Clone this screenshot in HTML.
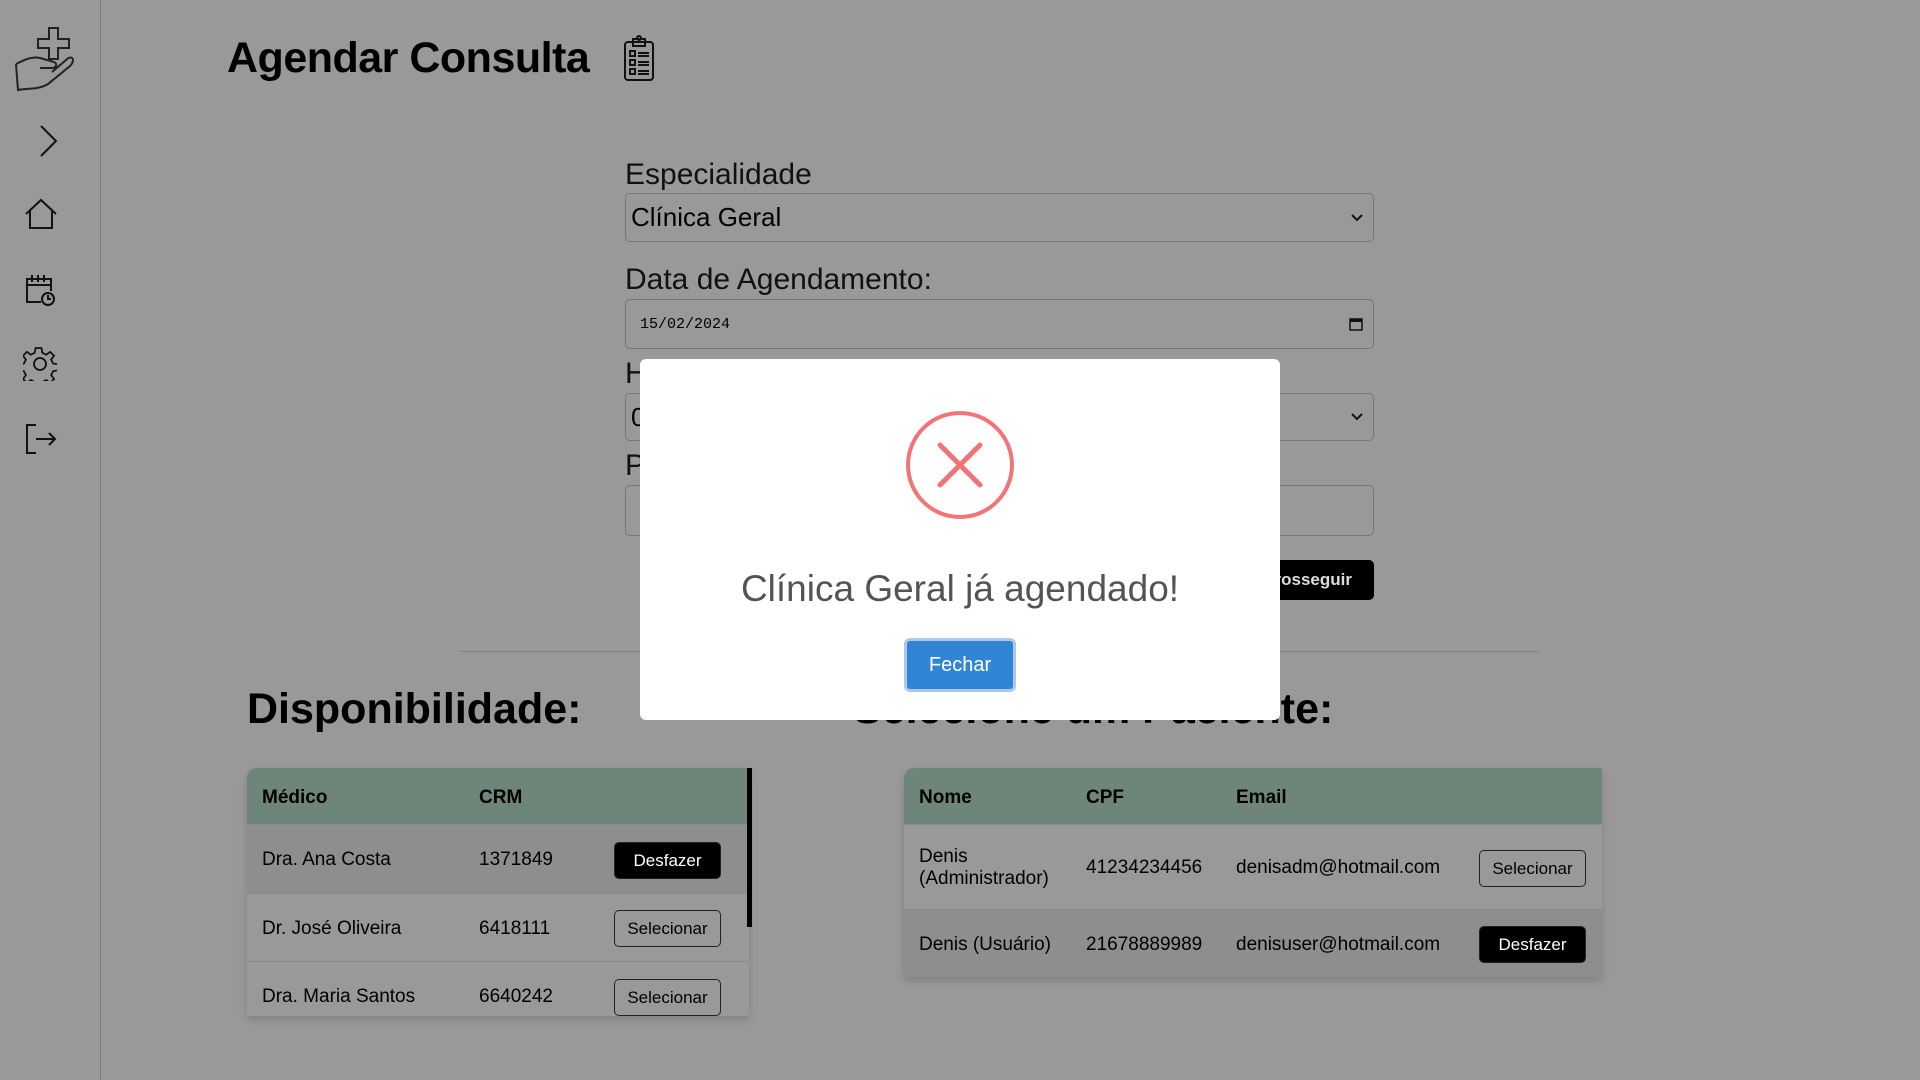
<!DOCTYPE html>
<html><head><meta charset="utf-8"><style>
*{box-sizing:border-box;margin:0;padding:0}
body{width:1920px;height:1080px;background:#999;font-family:"Liberation Sans",sans-serif;position:relative;overflow:hidden;color:#000}
.side{position:absolute;left:0;top:0;width:101px;height:1080px;border-right:1px solid #7a7a7a}
.abs{position:absolute}
h1{position:absolute;left:227px;top:34px;font-size:43px;font-weight:bold;letter-spacing:-0.5px}
.lbl{position:absolute;left:625px;font-size:30px;color:#111}
.inp{position:absolute;left:625px;width:749px;border:1px solid #777;border-radius:5px;font-size:26px;padding-left:5px;display:flex;align-items:center}
.hr{position:absolute;left:460px;top:651px;width:1078px;height:1px;background:#808080}
h2{position:absolute;font-size:43px;font-weight:bold}
table{border-collapse:collapse;font-size:19px}
th{background:#6e8679;text-align:left;height:56px;padding-left:15px;padding-top:4px}
td{padding-left:15px;border-top:1px solid #8a8a8a;padding-top:3px}
.btn{display:inline-block;width:107px;height:37px;border:1px solid #222;border-radius:5px;font-size:17px;text-align:center;line-height:35px}
.dark{background:#000;color:#fff}
.modal{position:absolute;left:640px;top:359px;width:640px;height:361px;background:#fff;border-radius:6px}
.wrap{position:absolute;box-shadow:0 4px 8px rgba(0,0,0,.15);border-top-left-radius:10px;overflow:hidden}
</style></head><body>
<div class="side">
<svg class="abs" style="left:14px;top:24px" width="76" height="74" viewBox="0 0 76 74" fill="none" stroke="#222" stroke-width="2">
<path d="M35 4h9v11h11v9H44v11h-9V24H24v-9h11z"/>
<path d="M2 40c8-4 16-8 24-6l14 4c4 2 2 6-2 6H26M2 40l2 26c10-2 20 0 30-6l22-18c6-6 2-12-4-6L38 48"/>
</svg>
<svg class="abs" style="left:38px;top:124px" width="22" height="34" viewBox="0 0 22 34" fill="none" stroke="#111" stroke-width="2"><path d="M3 2l15 15L3 32"/></svg>
<svg class="abs" style="left:24px;top:198px" width="34" height="32" viewBox="0 0 34 32" fill="none" stroke="#111" stroke-width="2"><path d="M2 16L17 2l15 14M6 13v17h22V13"/></svg>
<svg class="abs" style="left:24px;top:273px" width="32" height="34" viewBox="0 0 32 34" fill="none" stroke="#111" stroke-width="2"><path d="M17 29H3V6h24v12M3 12h24M8 2v7M14 2v7M20 2v7"/><circle cx="24" cy="26" r="6"/><path d="M24 22v4h3"/></svg>
<svg class="abs" style="left:23px;top:347px" width="34" height="34" viewBox="0 0 34 34" fill="none" stroke="#111" stroke-width="1.8"><path d="M14 2h6l1 5 4 2 4-3 4 4-3 4 2 4 5 1v6l-5 1-2 4 3 4-4 4-4-3-4 2-1 5h-6l-1-5-4-2-4 3-4-4 3-4-2-4-5-1v-6l5-1 2-4-3-4 4-4 4 3 4-2z" transform="scale(.97) translate(-1 -1)"/><circle cx="17" cy="17" r="6"/></svg>
<svg class="abs" style="left:24px;top:422px" width="34" height="34" viewBox="0 0 34 34" fill="none" stroke="#111" stroke-width="2"><path d="M12 3H3v28h9M12 17h19M25 11l6 6-6 6"/></svg>
</div>
<h1>Agendar Consulta</h1>
<svg class="abs" style="left:622px;top:34px" width="34" height="48" viewBox="0 0 34 48" fill="none" stroke="#111" stroke-width="2"><rect x="3" y="8" width="28" height="38" rx="3"/><path d="M11 8V5h12v3M11 8v4h12V8"/><circle cx="17" cy="4" r="2"/><rect x="8" y="17" width="5" height="5"/><rect x="8" y="26" width="5" height="5"/><rect x="8" y="35" width="5" height="5"/><path d="M16 19h11M16 22h11M16 28h11M16 31h11M16 37h11M16 40h11"/></svg>

<div class="lbl" style="top:158px">Especialidade</div>
<div class="inp" style="top:193px;height:49px">Clínica Geral<svg style="position:absolute;right:10px" width="12" height="8" viewBox="0 0 12 8"><path d="M1 1l5 5 5-5" fill="none" stroke="#111" stroke-width="2"/></svg></div>
<div class="lbl" style="top:263px">Data de Agendamento:</div>
<div class="inp" style="top:299px;height:50px;font-family:'Liberation Mono',monospace;font-size:15px;padding-left:14px">15/02/2024<svg style="position:absolute;right:10px" width="14" height="14" viewBox="0 0 14 14"><rect x="1" y="2" width="12" height="11" fill="none" stroke="#111" stroke-width="1.5"/><rect x="1" y="2" width="12" height="3" fill="#111"/></svg></div>
<div class="lbl" style="top:357px">H</div>
<div class="inp" style="top:393px;height:48px">0<svg style="position:absolute;right:10px" width="12" height="8" viewBox="0 0 12 8"><path d="M1 1l5 5 5-5" fill="none" stroke="#111" stroke-width="2"/></svg></div>
<div class="lbl" style="top:449px">P</div>
<div class="inp" style="top:485px;height:51px"></div>
<div class="abs" style="left:1220px;top:560px;width:154px;height:40px;background:#000;border-radius:5px;color:#ddd;font-weight:bold;font-size:17px;line-height:40px;text-align:right;padding-right:22px">Prosseguir</div>
<div class="hr"></div>

<h2 style="left:247px;top:685px">Disponibilidade:</h2>
<h2 style="left:853px;top:685px">Selecione um Paciente:</h2>

<div class="wrap" style="left:247px;top:768px;width:502px;height:248px">
<table style="width:502px">
<tr><th style="width:217px">Médico</th><th style="width:135px">CRM</th><th></th></tr>
<tr style="background:#8e8e8e;height:69px"><td>Dra. Ana Costa</td><td>1371849</td><td><span class="btn dark">Desfazer</span></td></tr>
<tr style="height:68px"><td>Dr. José Oliveira</td><td>6418111</td><td><span class="btn">Selecionar</span></td></tr>
<tr style="height:69px"><td>Dra. Maria Santos</td><td>6640242</td><td><span class="btn">Selecionar</span></td></tr>
</table></div>
<div class="abs" style="left:747px;top:768px;width:5px;height:159px;background:#000"></div>

<div class="wrap" style="left:904px;top:768px;width:698px">
<table style="width:698px">
<tr><th style="width:167px">Nome</th><th style="width:150px">CPF</th><th style="width:243px">Email</th><th></th></tr>
<tr style="height:85px"><td>Denis<br>(Administrador)</td><td>41234234456</td><td>denisadm@hotmail.com</td><td><span class="btn">Selecionar</span></td></tr>
<tr style="background:#8e8e8e;height:68px"><td>Denis (Usuário)</td><td>21678889989</td><td>denisuser@hotmail.com</td><td><span class="btn dark">Desfazer</span></td></tr>
</table></div>

<div class="modal">
<svg class="abs" style="left:264px;top:50px" width="112" height="112" viewBox="0 0 112 112" fill="none" stroke="#f27474"><circle cx="56" cy="56" r="52" stroke-width="4"/><path d="M36 36l40 40M76 36L36 76" stroke-width="5" stroke-linecap="round"/></svg>
<div class="abs" style="left:0;width:640px;top:209px;text-align:center;font-size:37px;color:#545454">Clínica Geral já agendado!</div>
<div class="abs" style="left:264px;top:279px;width:112px;height:54px;border:3px solid #acc9ea;border-radius:6px;background:#3085d6;color:#fff;font-size:20px;text-align:center;line-height:48px">Fechar</div>
</div>
</body></html>
